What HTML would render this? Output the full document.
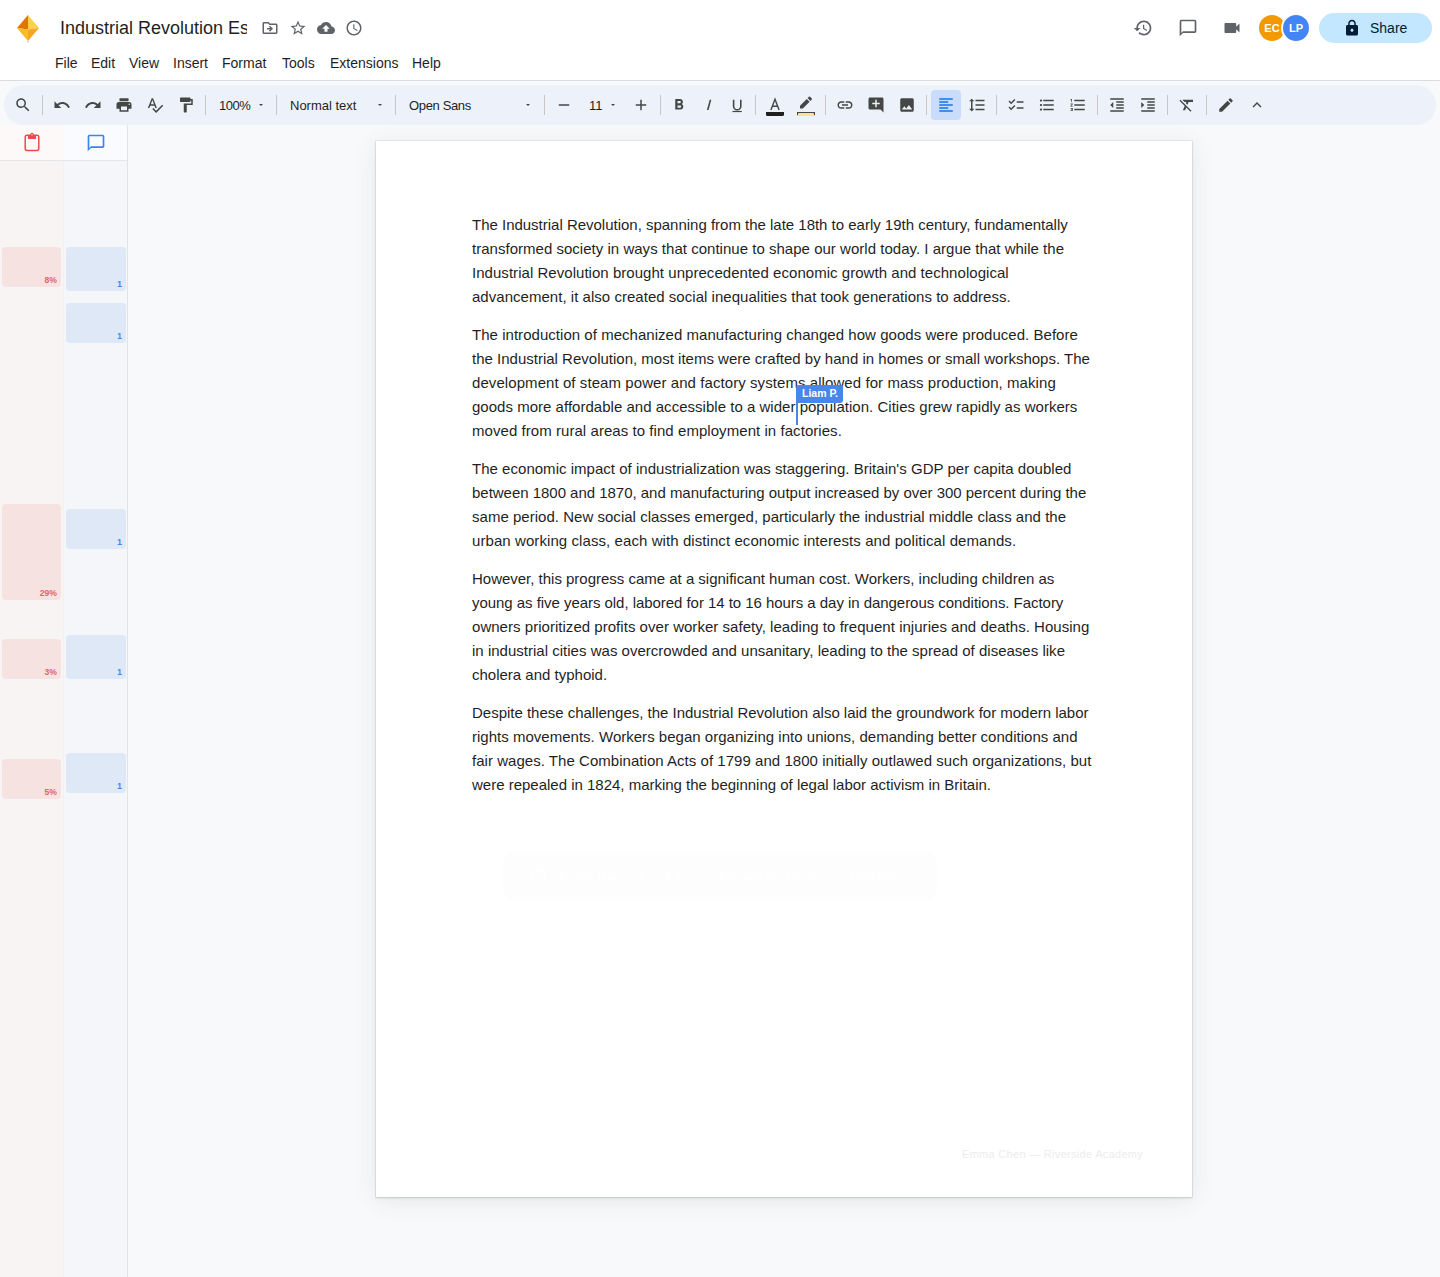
<!DOCTYPE html>
<html><head><meta charset="utf-8">
<style>
*{box-sizing:border-box;margin:0;padding:0}
html,body{width:1440px;height:1277px;overflow:hidden;background:#f8f9fa;font-family:"Liberation Sans",sans-serif;color:#1f1f1f}
.a{position:absolute}
#hdr{position:absolute;left:0;top:0;width:1440px;height:81px;background:#fff;border-bottom:1px solid #dadce0}
.ico{position:absolute;fill:#5f6368}
.menu{position:absolute;top:55px;font-size:14px;color:#1f1f1f;line-height:16px}
#tb{position:absolute;left:4px;top:85px;width:1432px;height:40px;border-radius:20px;background:#edf2fa}
.sep{position:absolute;top:95px;width:1px;height:20px;background:#c7c7c7}
.tt{position:absolute;font-size:13px;color:#1f1f1f;line-height:15px;top:98px}
.dd{position:absolute;top:104px;width:0;height:0;border-left:2.5px solid transparent;border-right:2.5px solid transparent;border-top:2.5px solid #444746}
#side{position:absolute;left:0;top:125px;width:128px;height:1152px}
#page{position:absolute;left:376px;top:141px;width:816px;height:1056px;background:#fff;box-shadow:0 0 0 1px rgba(60,64,67,.07),0 1px 2px rgba(60,64,67,.18),0 4px 22px rgba(60,64,67,.10)}
.ln{position:absolute;left:96px;font-size:15px;line-height:24px;white-space:nowrap;color:#1f1f1f}
.rb{position:absolute;left:2px;width:59px;background:#f7e2e2;border-radius:4px}
.rb span{position:absolute;right:4px;bottom:2px;font-size:8.6px;font-weight:bold;color:#e06666;line-height:10px}
.bb{position:absolute;left:66px;width:60px;background:#dee8f7;border-radius:4px}
.bb span{position:absolute;right:4px;bottom:2px;font-size:9px;font-weight:bold;color:#4a86f0;line-height:10px}
</style></head><body>
<div id="hdr">
<svg class="a" style="left:16px;top:14px" width="24" height="30" viewBox="0 0 24 30">
<polygon points="12,1 1,14 12,15.5" fill="#e37400"/>
<polygon points="12,1 23,14 12,15.5" fill="#fdd04c"/>
<polygon points="1,14 12,15.5 12,27" fill="#f9bb26"/>
<polygon points="23,14 12,15.5 12,27" fill="#f5a623"/>
<rect x="11.3" y="27" width="1.4" height="1.4" fill="#e8b9a8"/>
</svg>
<div class="a" style="left:60px;top:17px;width:187px;height:26px;overflow:hidden;white-space:nowrap;font-size:18px;line-height:22px;color:#1f1f1f">Industrial Revolution Essay</div>
<svg class="ico" style="left:261px;top:19px" width="18" height="18" viewBox="0 0 24 24"><path d="M20 6h-8l-2-2H4c-1.1 0-1.99.9-1.99 2L2 18c0 1.1.9 2 2 2h16c1.1 0 2-.9 2-2V8c0-1.1-.9-2-2-2zm0 12H4V6h5.17l2 2H20v10zm-7.84-6H8v2h4.16l-1.59 1.59L11.99 17 16 13.01 11.99 9l-1.41 1.41L12.16 12z"/></svg>
<svg class="ico" style="left:289px;top:19px" width="18" height="18" viewBox="0 0 24 24"><path d="M22 9.24l-7.19-.62L12 2 9.19 8.63 2 9.24l5.46 4.73L5.82 21 12 17.27 18.18 21l-1.63-7.03L22 9.24zM12 15.4l-3.76 2.27 1-4.28-3.32-2.88 4.38-.38L12 6.1l1.71 4.04 4.38.38-3.32 2.88 1 4.28L12 15.4z"/></svg>
<svg class="ico" style="left:317px;top:19px" width="18" height="18" viewBox="0 0 24 24"><path d="M19.35 10.04C18.67 6.59 15.640 4 12 4 9.11 4 6.6 5.64 5.35 8.04 2.34 8.36 0 10.91 0 14c0 3.31 2.69 6 6 6h13c2.76 0 5-2.24 5-5 0-2.64-2.05-4.78-4.65-4.96zM14 13v4h-4v-4H7l5-5 5 5h-3z"/></svg>
<svg class="ico" style="left:345px;top:19px" width="18" height="18" viewBox="0 0 24 24"><path d="M11.99 2C6.47 2 2 6.48 2 12s4.47 10 9.99 10C17.52 22 22 17.52 22 12S17.52 2 11.99 2zM12 20c-4.42 0-8-3.58-8-8s3.58-8 8-8 8 3.580 8 8-3.58 8-8 8zm.5-13H11v6l5.25 3.15.75-1.23-4.5-2.67z"/></svg>
<div class="menu" style="left:55px">File</div>
<div class="menu" style="left:91px">Edit</div>
<div class="menu" style="left:129px">View</div>
<div class="menu" style="left:173px">Insert</div>
<div class="menu" style="left:222px">Format</div>
<div class="menu" style="left:282px">Tools</div>
<div class="menu" style="left:330px">Extensions</div>
<div class="menu" style="left:412px">Help</div>
<svg class="ico" style="left:1133px;top:18px" width="20" height="20" viewBox="0 0 24 24"><path d="M13 3c-4.97 0-9 4.03-9 9H1l3.89 3.89.07.14L9 12H6c0-3.87 3.13-7 7-7s7 3.13 7 7-3.13 7-7 7c-1.93 0-3.68-.79-4.940-2.06l-1.42 1.42C8.27 19.99 10.51 21 13 21c4.97 0 9-4.03 9-9s-4.03-9-9-9zm-1 5v5l4.28 2.54.72-1.21-3.5-2.08V8H12z"/></svg>
<svg class="ico" style="left:1178px;top:18px" width="20" height="20" viewBox="0 0 24 24"><path d="M20 2H4c-1.1 0-2 .9-2 2v18l4-4h14c1.1 0 2-.9 2-2V4c0-1.1-.9-2-2-2zm0 14H6l-2 2V4h16v12z"/></svg>
<svg class="ico" style="left:1222px;top:18px" width="20" height="20" viewBox="0 0 24 24"><path d="M17 10.5V7c0-.55-.45-1-1-1H4c-.55 0-1 .45-1 1v10c0 .55.45 1 1 1h12c.55 0 1-.45 1-1v-3.5l4 4v-11l-4 4z"/></svg>
<div class="a" style="left:1259px;top:15px;width:26px;height:26px;border-radius:50%;background:#f29900;color:#fff;font-size:11px;font-weight:bold;line-height:26px;text-align:center">EC</div>
<div class="a" style="left:1281px;top:13px;width:30px;height:30px;border-radius:50%;background:#4285f4;border:2px solid #fff;color:#fff;font-size:11px;font-weight:bold;line-height:26px;text-align:center">LP</div>
<div class="a" style="left:1319px;top:13px;width:113px;height:30px;border-radius:15px;background:#c2e7ff"></div>
<svg class="a" style="left:1343px;top:19px" width="18" height="18" viewBox="0 0 24 24"><path fill="#001d35" d="M18 8h-1V6c0-2.76-2.24-5-5-5S7 3.24 7 6v2H6c-1.1 0-2 .9-2 2v10c0 1.1.9 2 2 2h12c1.1 0 2-.9 2-2V10c0-1.1-.9-2-2-2zm-6 9c-1.1 0-2-.9-2-2s.9-2 2-2 2 .9 2 2-.9 2-2 2zm3.1-9H8.9V6c0-1.71 1.39-3.1 3.1-3.1 1.71 0 3.1 1.39 3.1 3.1v2z"/></svg>
<div class="a" style="left:1370px;top:20px;font-size:14px;line-height:16px;color:#001d35">Share</div>
</div>
<div id="tb"></div>
<svg class="a" style="left:14px;top:96px" width="18" height="18" viewBox="0 0 24 24"><path fill="#444746" d="M15.5 14h-.79l-.28-.27C15.41 12.59 16 11.11 16 9.5 16 5.91 13.09 3 9.5 3S3 5.910 3 9.5 5.91 16 9.5 16c1.61 0 3.09-.59 4.23-1.57l.27.28v.79l5 4.99L20.49 19l-4.99-5zm-6 0C7.01 14 5 11.99 5 9.5S7.01 5 9.5 5 14 7.01 14 9.5 11.99 14 9.5 14z"/></svg>
<svg class="a" style="left:53px;top:96px" width="18" height="18" viewBox="0 0 24 24"><path fill="#444746" d="M12.5 8c-2.65 0-5.05.99-6.9 2.6L2 7v9h9l-3.62-3.62c1.39-1.16 3.16-1.88 5.12-1.88 3.54 0 6.55 2.31 7.6 5.5l2.37-.78C21.08 11.03 17.15 8 12.5 8z"/></svg>
<svg class="a" style="left:84px;top:96px" width="18" height="18" viewBox="0 0 24 24"><path fill="#444746" d="M18.4 10.6C16.55 8.99 14.15 8 11.5 8c-4.65 0-8.58 3.03-9.96 7.22L3.9 16c1.05-3.19 4.05-5.5 7.6-5.5 1.95 0 3.73.72 5.12 1.88L13 16h9V7l-3.6 3.6z"/></svg>
<svg class="a" style="left:115px;top:96px" width="18" height="18" viewBox="0 0 24 24"><path fill="#444746" d="M19 8H5c-1.66 0-3 1.34-3 3v6h4v4h12v-4h4v-6c0-1.66-1.34-3-3-3zm-3 11H8v-5h8v5zm3-7c-.55 0-1-.45-1-1s.45-1 1-1 1 .45 1 1-.45 1-1 1zm-1-9H6v4h12V3z"/></svg>
<svg class="a" style="left:146px;top:96px" width="18" height="18" viewBox="0 0 24 24"><path fill="#444746" d="M12.45 16h2.09L9.43 3H7.57L2.46 16h2.09l1.12-3h5.64l1.14 3zm-6.02-5L8.5 5.48 10.57 11H6.43zm15.16.59l-8.09 8.09L9.83 16l-1.41 1.41 5.09 5.09L23 13l-1.41-1.41z"/></svg>
<svg class="a" style="left:177px;top:96px" width="18" height="18" viewBox="0 0 24 24"><path fill="#444746" d="M18 4V3c0-.55-.45-1-1-1H5c-.55 0-1 .45-1 1v4c0 .55.45 1 1 1h12c.55 0 1-.45 1-1V6h1v4H9v11c0 .55.45 1 1 1h2c.55 0 1-.45 1-1v-9h8V4h-3z"/></svg>
<svg class="a" style="left:555px;top:96px" width="18" height="18" viewBox="0 0 24 24"><path fill="#444746" d="M19 13H5v-2h14v2z"/></svg>
<svg class="a" style="left:632px;top:96px" width="18" height="18" viewBox="0 0 24 24"><path fill="#444746" d="M19 13h-6v6h-2v-6H5v-2h6V5h2v6h6v2z"/></svg>
<svg class="a" style="left:670px;top:96px" width="18" height="18" viewBox="0 0 24 24"><path fill="#444746" d="M15.6 10.79c.97-.67 1.65-1.77 1.65-2.79 0-2.26-1.75-4-4-4H7v14h7.04c2.09 0 3.71-1.7 3.71-3.79 0-1.52-.86-2.82-2.1-3.42zM10 6.5h3c.83 0 1.5.67 1.5 1.5s-.67 1.5-1.5 1.5h-3v-3zm3.5 9H10v-3h3.5c.83 0 1.5.67 1.5 1.5s-.67 1.5-1.5 1.5z"/></svg>
<svg class="a" style="left:797px;top:95px" width="18" height="18" viewBox="0 0 24 24"><path fill="#444746" d="M13.06 5.19l3.75 3.75L7.75 18H4v-3.75l9.06-9.06zm4.82 2.68l-3.75-3.75 1.83-1.83c.39-.39 1.02-.39 1.41 0l2.34 2.34c.39.39.39 1.02 0 1.41l-1.83 1.83z"/></svg>
<svg class="a" style="left:836px;top:96px" width="18" height="18" viewBox="0 0 24 24"><path fill="#444746" d="M3.9 12c0-1.71 1.39-3.1 3.1-3.1h4V7H7c-2.76 0-5 2.24-5 5s2.24 5 5 5h4v-1.9H7c-1.71 0-3.1-1.39-3.1-3.1zM8 13h8v-2H8v2zm9-6h-4v1.9h4c1.71 0 3.1 1.39 3.1 3.1s-1.39 3.1-3.1 3.1h-4V17h4c2.76 0 5-2.24 5-5s-2.24-5-5-5z"/></svg>
<svg class="a" style="left:867px;top:96px" width="18" height="18" viewBox="0 0 24 24"><path fill="#444746" d="M22 4c0-1.1-.9-2-2-2H4c-1.1 0-1.99.9-1.99 2L2 16c0 1.1.9 2 2 2h14l4 4-.01-18zM17 11h-4v4h-2v-4H7V9h4V5h2v4h4v2z"/></svg>
<svg class="a" style="left:898px;top:96px" width="18" height="18" viewBox="0 0 24 24"><path fill="#444746" d="M21 19V5c0-1.1-.9-2-2-2H5c-1.1 0-2 .9-2 2v14c0 1.1.9 2 2 2h14c1.1 0 2-.9 2-2zM8.5 13.5l2.5 3.01L14.5 12l4.5 6H5l3.5-4.5z"/></svg>
<div class="a" style="left:931px;top:90px;width:30px;height:30px;border-radius:4px;background:#cadcfb"></div>
<svg class="a" style="left:937px;top:96px" width="18" height="18" viewBox="0 0 24 24"><path fill="#1a73e8" d="M15 15H3v2h12v-2zm0-8H3v2h12V7zM3 13h18v-2H3v2zm0 8h18v-2H3v2zM3 3v2h18V3H3z"/></svg>
<svg class="a" style="left:968px;top:96px" width="18" height="18" viewBox="0 0 24 24"><path fill="#444746" d="M6 7h2.5L5 3.5 1.5 7H4v10H1.5L5 20.5 8.5 17H6V7zm4-2v2h12V5H10zm0 14h12v-2H10v2zm0-6h12v-2H10v2z"/></svg>
<svg class="a" style="left:1007px;top:96px" width="18" height="18" viewBox="0 0 24 24"><path fill="#444746" d="M22 7h-9v2h9V7zm0 8h-9v2h9v-2zM5.54 11L2 7.46l1.41-1.41 2.12 2.12 4.24-4.24 1.41 1.41L5.54 11zm0 8L2 15.46l1.41-1.41 2.12 2.12 4.24-4.24 1.41 1.41L5.54 19z"/></svg>
<svg class="a" style="left:1038px;top:96px" width="18" height="18" viewBox="0 0 24 24"><path fill="#444746" d="M4 10.5c-.83 0-1.5.67-1.5 1.5s.67 1.5 1.5 1.5 1.5-.67 1.5-1.5-.67-1.5-1.5-1.5zm0-6c-.83 0-1.5.67-1.5 1.5S3.17 7.5 4 7.5 5.5 6.83 5.5 6 4.83 4.5 4 4.5zm0 12c-.83 0-1.5.68-1.5 1.5s.68 1.5 1.5 1.5 1.5-.68 1.5-1.5-.67-1.5-1.5-1.5zM7 19h14v-2H7v2zm0-6h14v-2H7v2zm0-8v2h14V5H7z"/></svg>
<svg class="a" style="left:1069px;top:96px" width="18" height="18" viewBox="0 0 24 24"><path fill="#444746" d="M2 17h2v.5H3v1h1v.5H2v1h3v-4H2v1zm1-9h1V4H2v1h1v3zm-1 3h1.8L2 13.1v.9h3v-1H3.2L5 10.9V10H2v1zm5-6v2h14V5H7zm0 14h14v-2H7v2zm0-6h14v-2H7v2z"/></svg>
<svg class="a" style="left:1108px;top:96px" width="18" height="18" viewBox="0 0 24 24"><path fill="#444746" d="M11 17h10v-2H11v2zm-8-5l4 4V8l-4 4zm0 9h18v-2H3v2zM3 3v2h18V3H3zm8 6h10V7H11v2zm0 4h10v-2H11v2z"/></svg>
<svg class="a" style="left:1139px;top:96px" width="18" height="18" viewBox="0 0 24 24"><path fill="#444746" d="M3 21h18v-2H3v2zM3 8v8l4-4-4-4zm8 9h10v-2H11v2zM3 3v2h18V3H3zm8 6h10V7H11v2zm0 4h10v-2H11v2z"/></svg>
<svg class="a" style="left:1178px;top:96px" width="18" height="18" viewBox="0 0 24 24"><path fill="#444746" d="M3.27 5L2 6.27l6.97 6.97L6.5 19h3l1.57-3.66L16.73 21 18 19.73 3.55 5.27 3.27 5zM6 5v.18L8.82 8h2.4l-.72 1.68 2.1 2.1L14.21 8H20V5H6z"/></svg>
<svg class="a" style="left:1217px;top:96px" width="18" height="18" viewBox="0 0 24 24"><path fill="#444746" d="M3 17.25V21h3.75L17.81 9.94l-3.75-3.75L3 17.25zM20.71 7.04c.39-.39.39-1.02 0-1.41l-2.34-2.34c-.39-.39-1.02-.39-1.41 0l-1.83 1.83 3.75 3.75 1.83-1.83z"/></svg>
<svg class="a" style="left:1248px;top:96px" width="18" height="18" viewBox="0 0 24 24"><path fill="#444746" d="M12 8l-6 6 1.41 1.41L12 10.83l4.59 4.58L18 14z"/></svg>
<div class="sep" style="left:42px"></div>
<div class="sep" style="left:205px"></div>
<div class="sep" style="left:276px"></div>
<div class="sep" style="left:395px"></div>
<div class="sep" style="left:544px"></div>
<div class="sep" style="left:660px"></div>
<div class="sep" style="left:755px"></div>
<div class="sep" style="left:825px"></div>
<div class="sep" style="left:926px"></div>
<div class="sep" style="left:996px"></div>
<div class="sep" style="left:1097px"></div>
<div class="sep" style="left:1167px"></div>
<div class="sep" style="left:1206px"></div>
<svg class="a" style="left:700px;top:90px" width="130" height="30" viewBox="700 90 130 30">
<polygon points="709.7,99.8 711.3,99.8 708.6,110 706.9,110" fill="#444746"/>
<path d="M733.6 99.8V106.2a3.6 3.6 0 0 0 7.2 0V99.8" fill="none" stroke="#444746" stroke-width="1.6"/>
<rect x="732.5" y="110.9" width="9.3" height="1.2" fill="#444746"/>
<path d="M770.9 110L775 99.3L779.1 110M772.4 106.2H777.6" fill="none" stroke="#444746" stroke-width="1.4"/>
<path d="M766 112H784V114.5Q784 116 782.5 116H767.5Q766 116 766 114.5Z" fill="#1f1f1f"/>
<rect x="797" y="112" width="18" height="3.2" fill="#444746"/>
<rect x="798" y="113" width="16" height="3" rx="1" fill="#fde293"/>
</svg>
<div class="tt" style="left:219px;letter-spacing:-0.5px">100%</div><div class="dd" style="left:259px"></div>
<div class="tt" style="left:290px">Normal text</div><div class="dd" style="left:378px"></div>
<div class="tt" style="left:409px;letter-spacing:-0.35px">Open Sans</div><div class="dd" style="left:526px"></div>
<div class="tt" style="left:589px">11</div><div class="dd" style="left:611px"></div>

<div id="side">
<div class="a" style="left:0;top:0;width:64px;height:1152px;background:#f7f4f3"></div>
<div class="a" style="left:64px;top:0;width:63px;height:1152px;background:#f4f6fa"></div>
<div class="a" style="left:63px;top:35px;width:1px;height:1117px;background:#f0f1f3"></div>
<div class="a" style="left:127px;top:0;width:1px;height:1152px;background:#e1e3e6"></div>
<div class="a" style="left:0;top:0;width:64px;height:35px;background:#fdf9f8"></div>
<div class="a" style="left:64px;top:0;width:63px;height:35px;background:#f9fbfe"></div>
<div class="a" style="left:0;top:35px;width:127px;height:1px;background:#e3e5e8"></div>
<svg class="a" style="left:20px;top:5px" width="24" height="24" viewBox="20 130 24 24">
<rect x="25.2" y="135.2" width="13.6" height="15.2" rx="1.8" fill="none" stroke="#e94b4b" stroke-width="1.5"/>
<rect x="28" y="135.6" width="8" height="3.4" fill="#e94b4b"/>
<circle cx="32" cy="134.6" r="1.8" fill="#e94b4b"/>
<circle cx="32" cy="134.8" r="0.7" fill="#fdf9f8"/>
</svg>
<svg class="a" style="left:86px;top:8px" width="20" height="20" viewBox="0 0 24 24"><path fill="#3b82f6" d="M20 2H4c-1.1 0-2 .9-2 2v18l4-4h14c1.1 0 2-.9 2-2V4c0-1.1-.9-2-2-2zm0 14H6l-2 2V4h16v12z"/></svg>
<div class="rb" style="top:122px;height:40px"><span>8%</span></div>
<div class="bb" style="top:122px;height:44px"><span>1</span></div>
<div class="bb" style="top:178px;height:40px"><span>1</span></div>
<div class="rb" style="top:379px;height:96px"><span>29%</span></div>
<div class="bb" style="top:384px;height:40px"><span>1</span></div>
<div class="rb" style="top:514px;height:40px"><span>3%</span></div>
<div class="bb" style="top:510px;height:44px"><span>1</span></div>
<div class="rb" style="top:634px;height:40px"><span>5%</span></div>
<div class="bb" style="top:628px;height:40px"><span>1</span></div>
</div>
<div id="page">
<div class="ln" style="top:72px;letter-spacing:-0.011px">The Industrial Revolution, spanning from the late 18th to early 19th century, fundamentally</div>
<div class="ln" style="top:96px;letter-spacing:0.022px">transformed society in ways that continue to shape our world today. I argue that while the</div>
<div class="ln" style="top:120px;letter-spacing:0.039px">Industrial Revolution brought unprecedented economic growth and technological</div>
<div class="ln" style="top:144px;letter-spacing:0.031px">advancement, it also created social inequalities that took generations to address.</div>
<div class="ln" style="top:182px;letter-spacing:0.036px">The introduction of mechanized manufacturing changed how goods were produced. Before</div>
<div class="ln" style="top:206px;letter-spacing:0.004px">the Industrial Revolution, most items were crafted by hand in homes or small workshops. The</div>
<div class="ln" style="top:230px;letter-spacing:0.074px">development of steam power and factory systems allowed for mass production, making</div>
<div class="ln" style="top:254px;letter-spacing:0.022px">goods more affordable and accessible to a wider population. Cities grew rapidly as workers</div>
<div class="ln" style="top:278px;letter-spacing:0.056px">moved from rural areas to find employment in factories.</div>
<div class="ln" style="top:316px;letter-spacing:0.026px">The economic impact of industrialization was staggering. Britain's GDP per capita doubled</div>
<div class="ln" style="top:340px;letter-spacing:-0.023px">between 1800 and 1870, and manufacturing output increased by over 300 percent during the</div>
<div class="ln" style="top:364px;letter-spacing:0.024px">same period. New social classes emerged, particularly the industrial middle class and the</div>
<div class="ln" style="top:388px;letter-spacing:0.079px">urban working class, each with distinct economic interests and political demands.</div>
<div class="ln" style="top:426px;letter-spacing:-0.012px">However, this progress came at a significant human cost. Workers, including children as</div>
<div class="ln" style="top:450px;letter-spacing:-0.045px">young as five years old, labored for 14 to 16 hours a day in dangerous conditions. Factory</div>
<div class="ln" style="top:474px;letter-spacing:0.033px">owners prioritized profits over worker safety, leading to frequent injuries and deaths. Housing</div>
<div class="ln" style="top:498px;letter-spacing:0.014px">in industrial cities was overcrowded and unsanitary, leading to the spread of diseases like</div>
<div class="ln" style="top:522px;letter-spacing:-0.000px">cholera and typhoid.</div>
<div class="ln" style="top:560px;letter-spacing:-0.015px">Despite these challenges, the Industrial Revolution also laid the groundwork for modern labor</div>
<div class="ln" style="top:584px;letter-spacing:0.015px">rights movements. Workers began organizing into unions, demanding better conditions and</div>
<div class="ln" style="top:608px;letter-spacing:0.037px">fair wages. The Combination Acts of 1799 and 1800 initially outlawed such organizations, but</div>
<div class="ln" style="top:632px;letter-spacing:-0.006px">were repealed in 1824, marking the beginning of legal labor activism in Britain.</div>
<div class="a" style="left:420px;top:244px;width:47px;height:18px;background:#4a86e8;border-radius:3px 3px 3px 0;color:#fff;font-size:10.5px;font-weight:bold;line-height:16px;padding-left:6px">Liam P.</div>
<div class="a" style="left:420px;top:261px;width:2px;height:23px;background:#4a86e8"></div>
<div class="a" style="left:127px;top:712px;width:434px;height:46px;border-radius:10px;background:#fdfdfd"></div>
<svg class="a" style="left:155px;top:726px" width="16" height="18" viewBox="0 0 16 18"><rect x="1.5" y="2.5" width="12" height="14" rx="1.5" fill="none" stroke="#fff" stroke-width="1.4"/><rect x="4" y="1.5" width="7" height="3" fill="#fff"/></svg>
<div class="a" style="left:183px;top:728px;font-size:13px;font-weight:bold;line-height:16px;color:#fff;white-space:nowrap">Paste tracked — 4 events logged for review</div>
<div class="a" style="left:474px;top:728px;font-size:13px;font-weight:bold;line-height:16px;color:#fff;white-space:nowrap;letter-spacing:-0.2px">DISMISS</div>
<div class="a" style="left:586px;top:1007px;font-size:11px;line-height:13px;letter-spacing:0.3px;color:#ececec;white-space:nowrap">Emma Chen — Riverside Academy</div>
</div>
</body></html>
